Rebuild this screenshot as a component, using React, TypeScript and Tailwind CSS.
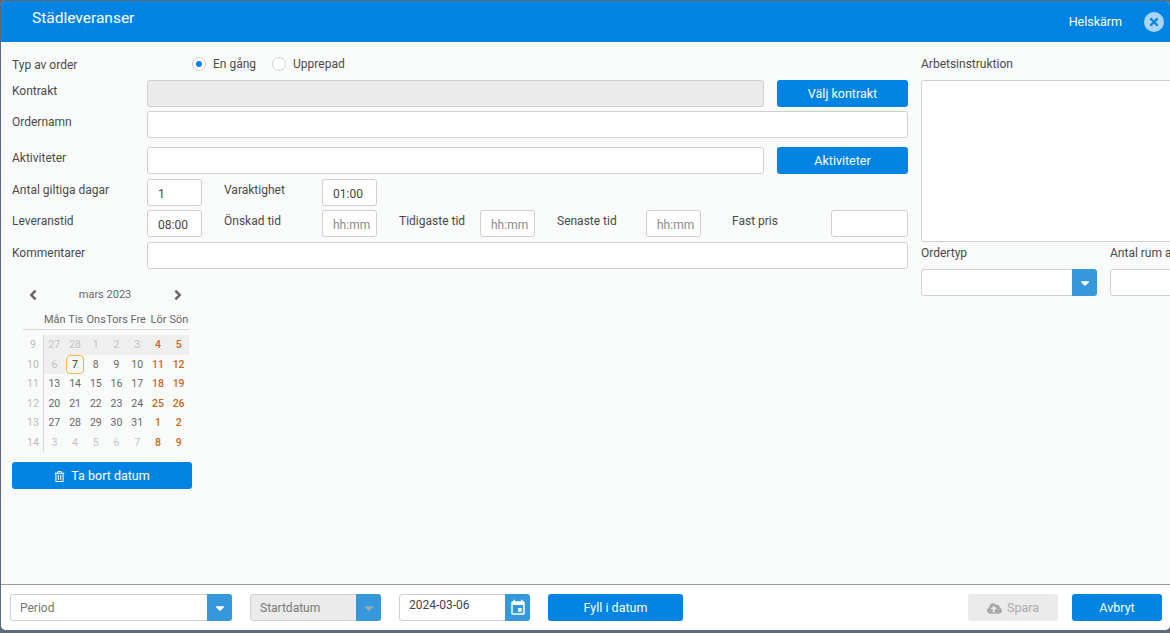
import { FaAngleLeft, FaAngleRight, FaCaretDown, FaCloudUploadAlt, FaRegTrashAlt, FaTimes } from "react-icons/fa";
import { MdEvent } from "react-icons/md";

const border = "border border-[#cfcfcf] rounded-[3px] bg-white";
const blueBtn = "flex items-center justify-center h-[27px] pt-px bg-[#0084e3] text-white text-[12.5px] rounded-[3px]";

function Label({ children, className = "" }: { children: React.ReactNode; className?: string }) {
  return <div className={`text-[12px] leading-[16px] text-[#4a4a4a] ${className}`}>{children}</div>;
}

function Field({ width, value, placeholder }: { width: string; value?: string; placeholder?: string }) {
  return (
    <div className={`${border} ${width} h-[27px] shrink-0 flex items-center pl-[10px] pt-[2px] text-[12px] overflow-hidden`}>
      {value && <span className="text-[#444]">{value}</span>}
      {placeholder && <span className="text-[#8a8a8a]">{placeholder}</span>}
    </div>
  );
}

function Select({ width, label, disabled }: { width: string; label?: string; disabled?: boolean }) {
  return (
    <div className={`${width} h-[27px] shrink-0 flex rounded-[3px] overflow-hidden`}>
      <div className={`flex-1 flex items-center pl-[9px] text-[12px] text-[#777] border border-r-0 border-[#cfcfcf] rounded-l-[3px] ${disabled ? "bg-[#ebebeb]" : "bg-white"}`}>
        {label}
      </div>
      <div className="w-[25px] bg-[#3498db] flex items-center justify-center">
        <FaCaretDown size={14} className={disabled ? "text-[#9aa9b5]" : "text-white"} />
      </div>
    </div>
  );
}

const days = ["Mån", "Tis", "Ons", "Tors", "Fre", "Lör", "Sön"];
const weeks = [
  { no: 9, d: [27, 28, 1, 2, 3, 4, 5], muted: [0, 1, 2, 3, 4], shade: 7 },
  { no: 10, d: [6, 7, 8, 9, 10, 11, 12], muted: [0], shade: 1 },
  { no: 11, d: [13, 14, 15, 16, 17, 18, 19], muted: [], shade: 0 },
  { no: 12, d: [20, 21, 22, 23, 24, 25, 26], muted: [], shade: 0 },
  { no: 13, d: [27, 28, 29, 30, 31, 1, 2], muted: [], shade: 0 },
  { no: 14, d: [3, 4, 5, 6, 7, 8, 9], muted: [0, 1, 2, 3, 4], shade: 0 },
];

function Calendar() {
  return (
    <div className="ml-[11px] mt-[16px] w-[166px] text-[10.5px]">
      <div className="h-[20px] flex items-center justify-between pl-[2px] pr-[3px] text-[#666]">
        <FaAngleLeft size={16} />
        <span className="text-[11px] -ml-[1px]">mars 2023</span>
        <FaAngleRight size={16} />
      </div>
      <div className="grid grid-cols-[21px_repeat(7,1fr)] h-[24px] items-end pb-[2px] border-b border-[#d8d8d8] text-[11px] text-[#666] text-center mt-[1px]">
        <span />
        {days.map((d) => (
          <span key={d} className="leading-[14px] whitespace-nowrap">{d}</span>
        ))}
      </div>
      <div className="mt-[5px]">
        {weeks.map((w) => (
          <div key={w.no} className="grid grid-cols-[21px_repeat(7,1fr)] h-[19.5px] text-center items-center leading-[19px]">
            <span className="text-[#bbb] h-full border-r border-[#d8d8d8]">{w.no}</span>
            {w.d.map((n, i) => {
              const today = w.no === 10 && n === 7;
              let color = "text-[#666]";
              if (i > 4) color = "text-[#c8671a] font-medium";
              else if (w.muted.includes(i)) color = "text-[#c4c4c4]";
              return (
                <span key={i} className={`h-full ${i < w.shade ? "bg-[#efefef]" : ""} ${today ? "mx-px border border-[#f5b83d] rounded-[4px] bg-[#f7f7f7] text-[#333] leading-[17px]" : color}`}>
                  {n}
                </span>
              );
            })}
          </div>
        ))}
      </div>
    </div>
  );
}

export default function App() {
  return (
    <div className="w-[1170px] h-[633px] overflow-hidden bg-[#5d6b78] pt-px pl-px pb-[3px] flex" style={{ fontFamily: "Roboto, sans-serif" }}>
      <div className="w-[1169px] h-full shrink-0 flex flex-col rounded-[5px] overflow-hidden bg-[#f9fbfa]">
        {/* header */}
        <div className="h-[41px] shrink-0 bg-[#0084e3] flex items-center text-white">
          <span className="ml-[31px] -mt-[5px] text-[15.5px]">Städleveranser</span>
          <span className="ml-auto text-[12.5px] mt-[1px]">Helskärm</span>
          <span className="ml-[22px] mr-[6px] w-[20px] h-[20px] rounded-full bg-[#a9d4f5] flex items-center justify-center">
            <FaTimes size={12} className="text-[#0084e3]" />
          </span>
        </div>

        {/* body */}
        <div className="flex-1 flex overflow-hidden">
          <div className="w-[897px] ml-[11px] shrink-0">
            <div className="flex items-center h-[16px] mt-[14px]">
              <Label className="w-[180px] pt-[1px]">Typ av order</Label>
              <span className="w-[14px] h-[14px] rounded-full border border-[#cfcfcf] bg-white flex items-center justify-center">
                <span className="w-[6px] h-[6px] rounded-full bg-[#0084e3]" />
              </span>
              <Label className="ml-[7px]">En gång</Label>
              <span className="ml-[16px] w-[14px] h-[14px] rounded-full border border-[#cfcfcf] bg-white" />
              <Label className="ml-[7px]">Upprepad</Label>
            </div>

            <div className="flex mt-[8px] h-[27px]">
              <Label className="w-[135px] mt-[3px]">Kontrakt</Label>
              <div className="w-[617px] h-[27px] border border-[#cfcfcf] rounded-[3px] bg-[#ebebeb]" />
              <div className={`${blueBtn} w-[131px] ml-[13px]`}>Välj kontrakt</div>
            </div>

            <div className="flex mt-[4px] h-[27px]">
              <Label className="w-[135px] mt-[3px]">Ordernamn</Label>
              <Field width="w-[761px]" />
            </div>

            <div className="flex mt-[9px] h-[27px]">
              <Label className="w-[135px] mt-[3px]">Aktiviteter</Label>
              <Field width="w-[617px]" />
              <div className={`${blueBtn} w-[131px] ml-[13px]`}>Aktiviteter</div>
            </div>

            <div className="flex mt-[5px] h-[27px]">
              <Label className="w-[135px] mt-[3px]">Antal giltiga dagar</Label>
              <Field width="w-[55px]" value="1" />
              <Label className="w-[98px] ml-[22px] mt-[3px]">Varaktighet</Label>
              <Field width="w-[55px]" value="01:00" />
            </div>

            <div className="flex mt-[4px] h-[27px]">
              <Label className="w-[135px] mt-[3px]">Leveranstid</Label>
              <Field width="w-[55px]" value="08:00" />
              <Label className="w-[98px] ml-[22px] mt-[3px]">Önskad tid</Label>
              <Field width="w-[55px]" placeholder="hh:mm" />
              <Label className="w-[81px] ml-[22px] mt-[3px]">Tidigaste tid</Label>
              <Field width="w-[55px]" placeholder="hh:mm" />
              <Label className="w-[89px] ml-[22px] mt-[3px]">Senaste tid</Label>
              <Field width="w-[55px]" placeholder="hh:mm" />
              <Label className="w-[99px] ml-[31px] mt-[3px]">Fast pris</Label>
              <Field width="w-[77px]" />
            </div>

            <div className="flex mt-[5px] h-[27px]">
              <Label className="w-[135px] mt-[3px]">Kommentarer</Label>
              <Field width="w-[761px]" />
            </div>

            <Calendar />

            <div className={`${blueBtn} w-[180px] mt-[10px] gap-[6px] pt-[2px]`}>
              <FaRegTrashAlt size={11} />
              Ta bort datum
            </div>
          </div>

          {/* right column, runs past the window edge */}
          <div className="ml-[12px] w-[365px] shrink-0">
            <Label className="mt-[14px]">Arbetsinstruktion</Label>
            <div className={`${border} w-[365px] h-[162px] mt-[8px]`} />
            <div className="flex gap-[13px] mt-[3px]">
              <div>
                <Label>Ordertyp</Label>
                <div className="mt-[8px]"><Select width="w-[176px]" /></div>
              </div>
              <div>
                <Label className="whitespace-nowrap">Antal rum a</Label>
                <div className="mt-[8px]"><Field width="w-[176px]" /></div>
              </div>
            </div>
          </div>
        </div>

        {/* footer */}
        <div className="h-[46px] shrink-0 border-t border-[#9a9a9a] bg-white flex items-center pl-[9px] pr-[8px]">
          <Select width="w-[222px]" label="Period" />
          <div className="ml-[18px]"><Select width="w-[131px]" label="Startdatum" disabled /></div>
          <div className="ml-[18px] w-[131px] h-[27px] flex rounded-[3px] overflow-hidden">
            <span className="flex-1 flex items-center pl-[9px] pb-[5px] text-[12px] text-[#444] bg-white border border-r-0 border-[#cfcfcf] rounded-l-[3px]">2024-03-06</span>
            <span className="w-[25px] bg-[#3498db] flex items-center justify-center">
              <MdEvent size={18} className="text-white" />
            </span>
          </div>
          <div className={`${blueBtn} w-[135px] ml-[18px]`}>Fyll i datum</div>
          <div className="ml-auto w-[90px] h-[27px] pt-px rounded-[3px] bg-[#ebebeb] flex items-center justify-center gap-[5px] text-[12.5px] text-[#aaa]">
            <FaCloudUploadAlt size={15} />
            Spara
          </div>
          <div className={`${blueBtn} w-[90px] ml-[14px]`}>Avbryt</div>
        </div>
      </div>
    </div>
  );
}
